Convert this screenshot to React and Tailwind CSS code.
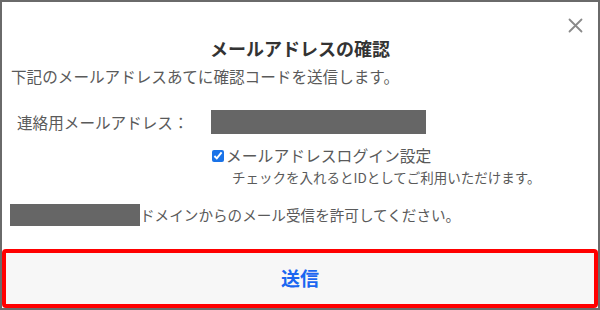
const FONT = { fontFamily: '"Noto Sans CJK JP", "Noto Sans", sans-serif' };

const CloseIcon = () => (
  <svg width="15" height="15" viewBox="0 0 15 15" fill="none" stroke="#8a8a8a" strokeWidth="1.8" strokeLinecap="round">
    <path d="M1.5 1.5l12 12M13.5 1.5l-12 12" />
  </svg>
);

export default function App() {
  return (
    <div className="w-[600px] h-[310px] bg-white border-2 border-[#6a6a6a] relative flex flex-col box-border" style={FONT}>
      <button className="absolute top-[16px] right-[15px]" aria-label="close">
        <CloseIcon />
      </button>

      <h1 className="mt-[34px] text-center text-[18px] leading-[24px] font-bold text-[#333]">
        メールアドレスの確認
      </h1>

      <p className="mt-[6px] pl-[9px] text-[15.6px] leading-[20px] text-[#5a5a5a]">
        下記のメールアドレスあてに確認コードを送信します。
      </p>

      <div className="mt-[24px] flex items-center h-[24px]">
        <span className="pl-[15px] w-[209px] text-[15.6px] leading-[20px] text-[#5a5a5a]">連絡用メールアドレス：</span>
        <span className="block w-[215px] h-[24px] bg-[#666]" />
      </div>

      <label className="mt-[12px] pl-[210px] flex items-center h-[20px] text-[15.8px] leading-[20px] text-[#5a5a5a]">
        <input type="checkbox" defaultChecked className="w-[12px] h-[12px] m-0 mr-[2px] accent-[#1a73e8]" />
        メールアドレスログイン設定
      </label>
      <p className="mt-[2px] pl-[230px] text-[13.5px] leading-[18px] text-[#5a5a5a]">
        チェックを入れるとIDとしてご利用いただけます。
      </p>

      <div className="mt-[18px] flex items-center h-[22px] pl-[8px]">
        <span className="block w-[130px] h-[22px] bg-[#666]" />
        <span className="text-[14.6px] leading-[20px] text-[#5a5a5a]">ドメインからのメール受信を許可してください。</span>
      </div>

      <button className="mt-[23px] h-[59px] w-full border-4 border-[#ff0000] rounded-[4px] bg-[#f7f7f7] text-[19px] font-bold text-[#1a66f0]">
        送信
      </button>
    </div>
  );
}
